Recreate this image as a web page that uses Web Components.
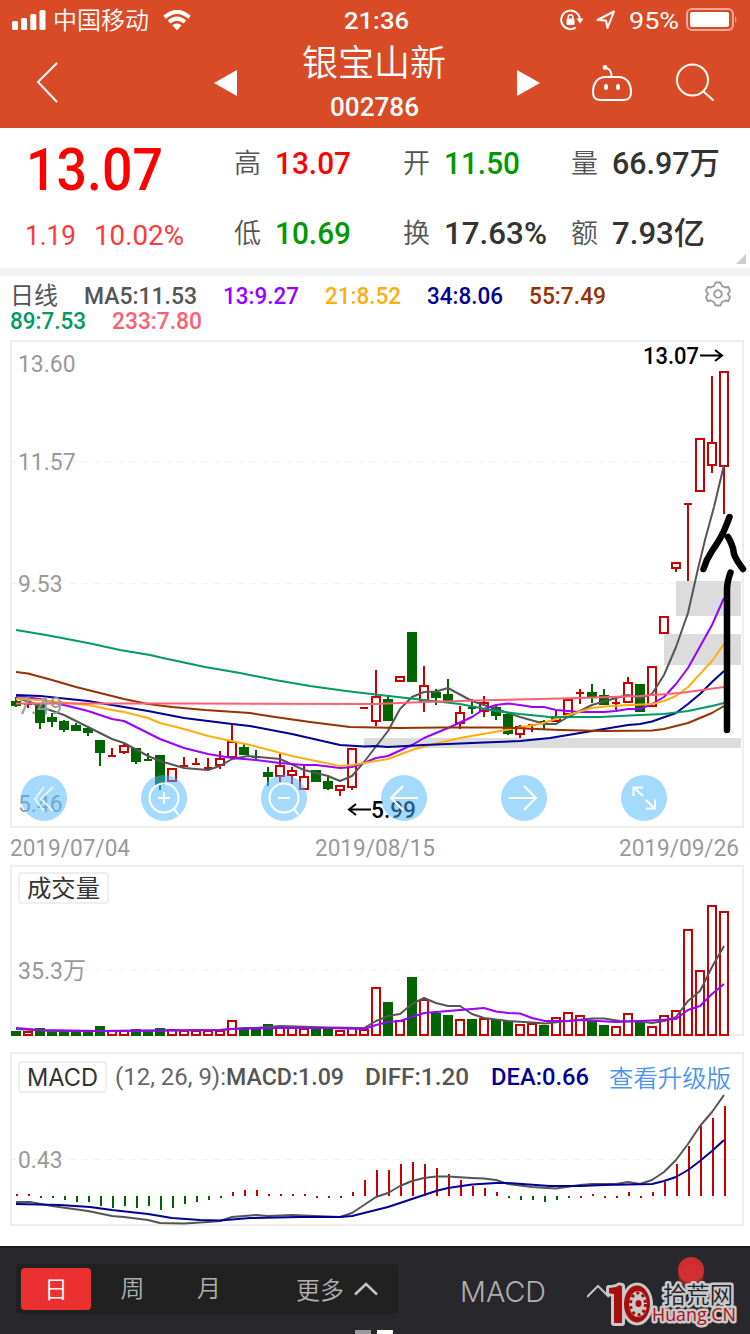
<!DOCTYPE html>
<html lang="zh-CN">
<head>
<meta charset="UTF-8">
<title>银宝山新 002786</title>
<style>
    body {
        margin: 0;
        width: 750px;
        height: 1334px;
        overflow: hidden;
        background: #fff;
        font-family: Roboto, "Noto Sans CJK SC", sans-serif;
        color: #333;
    }
</style>
</head>
<body>
<stock-app></stock-app>

<script>
class FitText extends HTMLElement {
    connectedCallback() {
        if (this.shadowRoot) return;
        this.attachShadow({ mode: 'open' });
        const w = Number(this.getAttribute('w'));
        this.shadowRoot.innerHTML = `
            <style>
                :host { display: block; flex: none; width: ${w}px; line-height: 1; white-space: nowrap; }
                span { display: inline-block; transform-origin: 0 50%; white-space: pre; vertical-align: top; }
            </style>
            <span><slot></slot></span>
        `;
        const span = this.shadowRoot.querySelector('span');
        const real = span.getBoundingClientRect().width;
        if (real) span.style.transform = `scaleX(${w / real})`;
    }
}

class StatusBar extends HTMLElement {
    constructor() {
        super();
        this.attachShadow({ mode: 'open' });
        this.shadowRoot.innerHTML = `
            <style>
                :host {
                    display: grid;
                    grid-template-columns: 1fr auto 1fr;
                    align-items: center;
                    height: 40px;
                    padding: 0 12px 0 12px;
                    background: #d94b26;
                    color: #fff;
                    font-size: 24px;
                }
                div { display: flex; align-items: center; }
                .carrier { margin: 2px 14px 0 7px; font-weight: 350; }
                .time { margin: 2px 0 0 3px; font-weight: 500; }
                .right { justify-content: flex-end; }
                .battery-text { margin: 2px 7px 0 13px; font-weight: 400; }
                svg { display: block; flex: none; }
            </style>
            <div>
                <svg width="34" height="20" fill="#fff">
                    <rect x="0" y="11" width="6" height="9" rx="1.5"/>
                    <rect x="9" y="8" width="6" height="12" rx="1.5"/>
                    <rect x="18.3" y="4" width="6" height="16" rx="1.5"/>
                    <rect x="27.5" y="0" width="6" height="20" rx="1.5"/>
                </svg>
                <fit-text class="carrier" w="96">中国移动</fit-text>
                <svg width="28" height="21" viewBox="0 0 28 21">
                    <path d="M1.5 7.2Q14-3.6 26.5 7.2M6 12Q14 5.200 22 12" fill="none" stroke="#fff" stroke-width="4"/>
                    <path d="M9.300 15.300Q14 11.600 18.700 15.300L14 20.300Z" fill="#fff"/>
                </svg>
            </div>
            <fit-text class="time" w="65">21:36</fit-text>
            <div class="right">
                <svg width="24" height="22" viewBox="0 0 24 22" fill="none" stroke="#fff" stroke-width="2">
                    <path d="M15.800 18.500A9.300 9.300 0 1 1 19.800 10"/>
                    <path d="M16.500 9.500h7l-3.500 5z" fill="#fff" stroke="none"/>
                    <rect x="6.500" y="9.500" width="8" height="6.500" rx="1" fill="#fff" stroke="none"/>
                    <path d="M8.200 10V8a2.300 2.300 0 0 1 4.600 0v2" stroke-width="1.500"/>
                </svg>
                <svg width="20" height="20" viewBox="0 0 20 20" style="margin-left:12px">
                    <path d="M1.500 10L18 1.500L11.500 18L10 10.500Z" fill="none" stroke="#fff" stroke-width="2" stroke-linejoin="round"/>
                </svg>
                <fit-text class="battery-text" w="50">95%</fit-text>
                <svg width="52" height="24" viewBox="0 0 52 24">
                    <rect x="1" y="1" width="46" height="21" rx="5" fill="none" stroke="#f0a793" stroke-width="2"/>
                    <rect x="4" y="4" width="39" height="15" rx="2" fill="#fff"/>
                    <path d="M49 8q3 3.500 0 7z" fill="#f0a793"/>
                </svg>
            </div>
        `;
    }
}

class NavBar extends HTMLElement {
    constructor() {
        super();
        this.attachShadow({ mode: 'open' });
        this.shadowRoot.innerHTML = `
            <style>
                :host {
                    display: grid;
                    grid-template-columns: 178px 88px 215px 74px 85px 40px;
                    align-items: center;
                    box-sizing: border-box;
                    height: 88px;
                    padding: 0 0 2px 36px;
                    background: #d94b26;
                    color: #fff;
                }
                svg { display: block; fill: none; stroke: #fff; stroke-width: 2; }
                .title { display: flex; flex-direction: column; align-items: center; gap: 12px; width: 144px; }
                .name { font-size: 36px; font-weight: 350; }
                .code { font-size: 26px; font-weight: 500; }
            </style>
            <svg width="24" height="42"><path d="M21 1L2 20L21 40"/></svg>
            <svg width="24" height="26"><path d="M0 13L23 0V26Z" fill="#fff" stroke="none"/></svg>
            <div class="title">
                <fit-text class="name" w="144"><slot name="name"></slot></fit-text>
                <fit-text class="code" w="89"><slot name="code"></slot></fit-text>
            </div>
            <svg width="24" height="26"><path d="M0 0L23 13L0 26Z" fill="#fff" stroke="none"/></svg>
            <svg width="42" height="38" viewBox="0 0 42 38">
                <path d="M14 4Q20.500 4 20.500 13M15 13H27C37 13 40 21 40 28C40 34.500 37 36 31 36H11C5 36 2 34.500 2 28C2 21 5 13 15 13Z"/>
                <circle cx="14" cy="3.500" r="2.400" fill="#fff" stroke="none"/>
                <g fill="#fff" stroke="none"><ellipse cx="15" cy="23" rx="2" ry="3"/><ellipse cx="27" cy="23" rx="2" ry="3"/></g>
            </svg>
            <svg width="40" height="40"><circle cx="16.500" cy="17" r="15.500"/><path d="M27 28L37.500 37.500"/></svg>
        `;
    }
}

class QuotePanel extends HTMLElement {
    constructor() {
        super();
        this.attachShadow({ mode: 'open' });
        // label, value, value width, colour
        const cells = [
            ['高', '13.07', 75, '#f00'], ['开', '11.50', 75, '#090'], ['量', '66.97万', 107, '#333'],
            ['低', '10.69', 75, '#090'], ['换', '17.63%', 102, '#333'], ['额', '7.93亿', 92, '#333'],
        ];
        this.shadowRoot.innerHTML = `
            <style>
                :host {
                    display: grid;
                    grid-template-columns: 234px 1fr 4px;
                    height: 140px;
                    border-bottom: 8px solid #f4f4f4;
                }
                .price { padding: 12px 0 0 25px; }
                .big { font-size: 59px; font-weight: 500; color: #f00; margin-left: 1px; }
                .change { display: flex; gap: 18px; margin-top: 23px; font-size: 28px; color: #ff3838; }
                .cells { display: grid; grid-template-columns: 169px 168px 1fr; grid-template-rows: 70px 70px; }
                .cell { display: flex; align-items: center; gap: 14px; font-size: 31px; font-weight: 500; }
                .label { margin-top: 3px; font-size: 27px; font-weight: 350; color: #555; }
                svg { align-self: end; justify-self: end; margin: 0 4px 4px 0; overflow: visible; }
            </style>
            <div class="price">
                <fit-text class="big" w="137">13.07</fit-text>
                <div class="change"><fit-text w="51">1.19</fit-text><fit-text w="90">10.02%</fit-text></div>
            </div>
            <div class="cells">
                ${cells.map(([label, value, w, color]) => `
                    <div class="cell"><fit-text class="label" w="27">${label}</fit-text><fit-text w="${w + 1}" style="color:${color}">${value}</fit-text></div>
                `).join('')}
            </div>
            <svg width="10" height="10"><path d="M10 0V10H0Z" fill="#ccc"/></svg>
        `;
    }
}

class MaLegend extends HTMLElement {
    constructor() {
        super();
        this.attachShadow({ mode: 'open' });
        this.shadowRoot.innerHTML = `
            <style>
                :host { display: block; height: 57px; padding: 7px 19px 0 10px; font-size: 24px; font-weight: 500; box-sizing: content-box; }
                div { display: flex; gap: 26px; height: 25px; align-items: center; }
                svg { margin: -4px 0 0 auto; }
            </style>
            <div>
                <fit-text w="48" style="color:#555;font-weight:400">日线</fit-text>
                <fit-text w="113" style="color:#555">MA5:11.53</fit-text>
                <fit-text w="76" style="color:#90f">13:9.27</fit-text>
                <fit-text w="76" style="color:#ffae0d">21:8.52</fit-text>
                <fit-text w="76" style="color:#000096">34:8.06</fit-text>
                <fit-text w="77" style="color:#963200">55:7.49</fit-text>
                <svg width="26" height="26" viewBox="-13 -13 26 26" fill="none" stroke="#999" stroke-width="1.800" stroke-linejoin="round">
                    <path d="M-2.500-11.500H2.500L4-8L7.500-6.500L10.500-7L12-3L9.800 0L12 3L10.500 7L7.500 6.500L4 8L2.500 11.500H-2.500L-4 8L-7.500 6.500L-10.500 7L-12 3L-9.800 0L-12-3L-10.500-7L-7.500-6.500L-4-8Z"/>
                    <circle r="3.800"/>
                </svg>
            </div>
            <div>
                <fit-text w="76" style="color:#009a64">89:7.53</fit-text>
                <fit-text w="90" style="color:#ff5f73">233:7.80</fit-text>
            </div>
        `;
    }
}

const UP = '#c80000';
const DOWN = '#006400';
const colX = i => 16 + i * 12;

// direction, body top, body bottom, high, low, volume top, macd end
const DAYS = [
    ['d',701,706,697,707,1031,1194], ['u',703,705,701,708,1031,1194], ['d',704,723,704,729,1028,1198], ['d',717,722,713,727,1031,1198],
    ['d',721,730,720,732,1032,1200], ['d',725,731,723,731,1031,1202], ['d',728,733,726,736,1031,1202], ['d',740,753,740,766,1026,1206],
    ['u',755,757,748,757,1030,1208], ['u',745,753,743,754,1030,1206], ['d',748,762,748,764,1029,1208], ['d',759,761,753,761,1031,1206],
    ['d',755,785,755,790,1028,1210], ['u',768,782,768,782,1029,1208], ['u',765,767,757,767,1030,1204], ['u',763,765,758,765,1030,1202],
    ['u',767,769,758,769,1030,1200], ['u',758,766,751,769,1030,1198], ['u',741,758,724,758,1020,1192], ['d',747,755,744,755,1028,1190],
    ['d',756,758,750,760,1028,1190], ['d',772,777,767,786,1024,1194], ['u',765,777,754,782,1027,1194], ['u',770,776,767,784,1026,1194],
    ['u',776,790,766,790,1028,1194], ['d',770,782,770,782,1029,-1], ['d',781,789,777,790,1029,1198], ['u',785,791,785,796,1030,1198],
    ['u',748,788,748,790,1027,1192], ['u',707,709,707,709,1029,1180], ['u',696,722,670,726,987,1170], ['d',699,721,697,721,1002,1170],
    ['u',676,682,676,682,1020,1164], ['d',632,682,632,682,977,1162], ['u',685,702,666,712,999,1164], ['d',692,698,689,705,1013,1168],
    ['d',694,702,679,702,1015,1174], ['u',712,724,706,729,1019,1180], ['d',707,709,699,714,1019,1186], ['u',702,712,696,717,1018,1188],
    ['d',707,716,705,720,1020,1192], ['d',714,734,713,735,1021,1198], ['u',726,735,725,738,1024,1200], ['u',724,726,724,732,1023,1200],
    ['d',721,723,720,729,1025,1202], ['u',717,722,711,722,1017,1200], ['u',699,715,699,715,1012,1198], ['u',692,694,689,704,1015,-1],
    ['d',692,697,684,703,1021,1194], ['d',695,705,689,705,1025,-1], ['u',702,704,699,710,1026,-1], ['u',682,703,677,703,1013,1192],
    ['d',684,712,684,712,1022,-1], ['u',666,707,666,707,1026,1192], ['u',616,634,616,634,1015,1182], ['u',562,569,562,572,1010,1164],
    ['u',503,505,503,581,929,1146], ['u',438,492,438,492,970,1126], ['u',442,466,376,473,905,1118], ['u',371,467,371,514,911,1106],
];

const line = (points, color) => `<polyline points="${points}" fill="none" stroke="${color}" stroke-width="2" stroke-linejoin="round"/>`;
const grid = y => `<path d="M12 ${y}H737" stroke="#f0f0f0" stroke-dasharray="6 6" stroke-dashoffset="2"/>`;
const label = (x, y, w, text, color = '#999', weight = 400) =>
    `<text x="${x}" y="${y}" textLength="${w}" lengthAdjust="spacingAndGlyphs" fill="${color}" font-weight="${weight}">${text}</text>`;

const bar = (x, top, bottom, dir) => dir === 'u'
    ? `<rect x="${x - 4}" y="${top + 1}" width="8" height="${bottom - top - 2}" fill="#fff" stroke="${UP}" stroke-width="2"/>`
    : `<rect x="${x - 5}" y="${top}" width="10" height="${bottom - top}" fill="${DOWN}"/>`;

// Bar with a wick through the middle; rising days are hollow
const candle = ([dir, top, bottom, high, low], i) => {
    const x = colX(i);
    const color = dir === 'u' ? UP : DOWN;
    let out = '';
    if (high < top) out += `<rect x="${x - 1}" y="${high}" width="2" height="${top - high}" fill="${color}"/>`;
    if (low > bottom) out += `<rect x="${x - 1}" y="${bottom}" width="2" height="${low - bottom}" fill="${color}"/>`;
    if (bottom - top <= 2) out += `<rect x="${x - 4}" y="${top}" width="8" height="2" fill="${color}"/>`;
    else out += bar(x, top, bottom, dir);
    return out;
};

/**
 * Framed plot with the shared look; subclasses give plot() and area()
 * Coordinates inside the plots are screen coordinates
 */
class ChartPanel extends HTMLElement {
    constructor() {
        super();
        this.attachShadow({ mode: 'open' });
        const [top, height] = this.area();
        this.shadowRoot.innerHTML = `
            <style>
                :host { display: grid; width: 750px; height: ${height}px; }
                svg.plot { grid-area: 1 / 1; display: block; font-size: 24px; overflow: visible; }
                .over { grid-area: 1 / 1; }
            </style>
            <svg class="plot" width="750" height="${height}" viewBox="0 ${top} 750 ${height}">
                <rect x="11" y="${top + 1}" width="732" height="${height - 2}" fill="none" stroke="#eee" stroke-width="2"/>
                ${this.plot()}
            </svg>
            <div class="over"><slot></slot></div>
        `;
    }
}

class PriceChart extends ChartPanel {
    area() { return [340, 488]; }

    plot() {
        return `
            ${grid(461.5)}${grid(583.5)}${grid(705.5)}
            <g fill="#dcdcdc">
                <rect x="676" y="581" width="65" height="35"/>
                <rect x="664" y="634" width="77" height="31"/>
                <rect x="364" y="738" width="377" height="10"/>
            </g>
            ${DAYS.map(candle).join('')}
            ${line('16,698 30,702 44,708 64,715 88,727 112,739 124,743 148,756 160,761 184,768 208,770 220,766 232,759 248,756 280,759 304,770 328,776 340,781 352,776 364,762 388,731 400,709 412,697 424,692 436,691.5 448,688 472,701 496,709 520,717 545,724 556,724 568,717 592,705 616,698 628,695 640,698 652,694 664,675 676,647 688,613 697,573 705,540 714,507 724,465', '#555')}
            ${line('16,696 40,699 64,705 88,711 112,719 124,721 148,733 160,739 184,748 208,754 232,758 256,760 280,763 304,765 316,765 340,768 352,767 364,763 376,758 388,756 412,745 424,738 448,728 472,717 484,709 496,705 508,703.5 520,705 532,707 544,707 556,710 580,712 604,712 616,711 628,709 640,709 652,704 664,697 676,684 688,668 712,625 724,598', '#90f')}
            ${line('16,699 40,700 88,705 112,710 124,712 148,718 160,723 184,729 208,736 250,745 292,756 340,766 352,765 388,759 412,750 430,745 460,738 500,731 540,724 568,715 592,708 610,706 652,704 664,701 676,696 688,687 712,661 724,644', '#ffae0d')}
            ${line('16,695 40,696 88,701 112,705 148,711 184,718 232,724 250,726 292,734 340,745 364,746.5 376,746 388,747 424,745 484,742.5 520,741 550,738 580,733 628,725 640,724 652,721.5 676,713 688,704 700,694 712,682 724,671', '#000096')}
            ${line('16,672 28,673.5 52,680 76,687 100,693 124,699 148,704 172,707 205,710 250,713 275,717 310,722 350,727 400,728 440,727.5 500,727.5 560,730 604,731 652,730.5 664,729 688,723 712,713 724,706', '#963200')}
            ${line('16,630 46,635 88,643 120,650 150,655 163,658 205,667 240,673 275,680 310,686 346,691 380,695 424,700 460,704 496,711 520,714 550,717 600,717 640,715 664,714 688,711 712,706 724,703', '#009a64')}
            ${line('16,703.5 200,703.5 376,704 424,702 496,700 580,698 640,696 680,693 724,687', '#ff5f73')}
            ${label(18, 372, 57.5, '13.60')}
            ${label(18, 470, 57.5, '11.57')}
            ${label(18, 592, 44.5, '9.53')}
            ${label(18, 714, 44.5, '7.49')}
            ${label(18, 812, 44.5, '5.46')}
            ${label(643, 364, 56, '13.07', '#000', 500)}
            ${label(371, 818, 45, '5.99', '#000', 500)}
            <path d="M700 355.500H722M715 350L722 355.500L715 361M371 809.500H349M356 804L349 809.500L356 815" fill="none" stroke="#000" stroke-width="2"/>
            <path d="M729.500 517C724 531 723 535 712 551Q706 560 703.500 569M728 537Q733 545 734 554Q736 560 743 569M730.500 572.500Q727 582 727 590V730" fill="none" stroke="#000" stroke-width="6.500" stroke-linecap="round" stroke-linejoin="round"/>
        `;
    }
}

class VolumeChart extends ChartPanel {
    area() { return [865, 171]; }

    plot() {
        return `
            ${grid(970)}
            ${DAYS.map((d, i) => bar(colX(i), d[5], 1036, d[0])).join('')}
            ${line('16,1029 52,1031 100,1031 160,1030.5 220,1030 244,1028 256,1028 280,1026 328,1027.5 364,1028 376,1021 388,1016 400,1014 412,1004 424,998 436,1003 448,1006 460,1006 472,1014 484,1018 508,1021 532,1022.5 545,1023.5 568,1021 592,1018.5 604,1018.5 620,1021 640,1021.500 652,1023 664,1021 676,1017 688,1001 700,991 712,967 724,946', '#555')}
            ${line('16,1028 40,1030 100,1031 220,1030 232,1029 280,1028 330,1028 364,1029 376,1025 388,1022 400,1021 424,1013 448,1011 484,1008 496,1011.5 508,1013 520,1013.500 532,1018 545,1021 568,1021 580,1020 616,1022 652,1020.5 676,1019 688,1010 700,1006 712,994 724,984', '#90f')}
            ${label(18, 979, 68, '35.3万')}
        `;
    }
}

class MacdChart extends ChartPanel {
    area() { return [1052, 174]; }

    // Bars grow from the zero line at 1196; -1 marks a flat day
    stick(end, i) {
        const flat = end === -1;
        const rising = end < 1196;
        const y = flat || !rising ? 1196 : end;
        const h = flat ? 2 : Math.abs(1196 - end);
        return `<rect x="${colX(i)}" y="${y}" width="2" height="${h}" fill="${rising ? UP : DOWN}"/>`;
    }

    plot() {
        return `
            ${grid(1159.5)}
            ${DAYS.map((d, i) => this.stick(d[6], i)).join('')}
            ${line('16,1202 30,1202 52,1206 88,1211 112,1216 124,1217 148,1220 160,1223 184,1223.5 208,1222 220,1221 232,1217 256,1215 268,1216 292,1215 316,1216 340,1217 352,1213 364,1205 376,1197 388,1193 400,1186 412,1181 424,1178 436,1176.5 448,1176.5 472,1178 484,1178.5 496,1180 508,1184 532,1187 556,1188.5 580,1185 592,1184 616,1184 628,1182 640,1184 652,1180 664,1172 676,1160 688,1144 700,1126 712,1112 724,1095', '#555')}
            ${line('16,1204 60,1205 90,1207 112,1210 148,1214 172,1218 200,1220 220,1220.5 250,1218 300,1217 340,1217 352,1216 364,1213 376,1210 388,1207 412,1199 436,1191 448,1188 472,1184.5 496,1183 508,1183 550,1186 580,1186 604,1185 652,1184 664,1181 676,1177 688,1170 700,1161 712,1151 724,1140', '#000096')}
            ${label(18, 1168, 44.5, '0.43')}
        `;
    }
}

/**
 * Small bordered name in the corner of a plot
 */
class ChartTag extends HTMLElement {
    constructor() {
        super();
        this.attachShadow({ mode: 'open' });
        this.shadowRoot.innerHTML = `
            <style>
                :host {
                    display: inline-flex;
                    align-items: center;
                    box-sizing: border-box;
                    height: 32px;
                    padding: 2px 7px 0;
                    border: 2px solid #eee;
                    border-radius: 4px;
                    background: #fff;
                    font-size: 24px;
                    color: #333;
                }
            </style>
            <slot></slot>
        `;
    }
}

class ChartControls extends HTMLElement {
    constructor() {
        super();
        this.attachShadow({ mode: 'open' });
        const icons = [
            '<path d="M23 12L14 24L23 36M32 12L20 24L32 36" opacity=".75"/>',
            '<circle cx="23" cy="23" r="14.500"/><path d="M33 34L37.500 40M17 23H29M23 17V29"/>',
            '<circle cx="23" cy="23" r="14.500"/><path d="M33 34L37.500 40M17 23H29"/>',
            '<path d="M37 23H10M22 11L10 23L22 35"/>',
            '<path d="M8 23H35M23 11L35 23L23 35"/>',
            '<path d="M22 21L13 12.500M12.500 21V12.500H22M25 25L33.500 33.500M34 24.500V33.500H25"/>',
        ];
        this.shadowRoot.innerHTML = `
            <style>
                :host { display: flex; gap: 74px; padding: 435px 0 0 21px; }
                svg { display: block; border-radius: 50%; background: rgba(75, 181, 255, .5); }
                svg:first-child { background: rgba(75, 181, 255, .37); }
            </style>
            ${icons.map(icon => `<svg width="46" height="46" fill="none" stroke="#fff" stroke-width="2">${icon}</svg>`).join('')}
        `;
    }
}

class BottomBar extends HTMLElement {
    constructor() {
        super();
        this.attachShadow({ mode: 'open' });
        this.shadowRoot.innerHTML = `
            <style>
                :host {
                    display: grid;
                    grid-template-columns: 444px 149px 1fr;
                    grid-template-rows: 66px 4px;
                    box-sizing: border-box;
                    height: 88px;
                    padding: 16px 0 0 16px;
                    border-top: 2px solid #1b1a1e;
                    background: #28272c;
                    color: #b0b0b0;
                    font-size: 24px;
                    font-weight: 350;
                }
                .periods {
                    display: grid;
                    grid-template-columns: 70px 83px 70px 1fr;
                    align-items: center;
                    box-sizing: border-box;
                    width: 382px;
                    height: 50px;
                    padding: 0 5px;
                    border-radius: 4px;
                    background: #212121;
                    text-align: center;
                    line-height: 42px;
                }
                .active { height: 42px; line-height: 45px; border-radius: 4px; background: #ea3030; color: #fff; }
                .more { display: flex; gap: 10px; align-items: center; padding-left: 52px; }
                .more fit-text { margin-top: 3px; }
                .pick { display: flex; align-items: center; gap: 41px; height: 54px; font-size: 29px; }
                .pages { display: flex; gap: 6px; grid-column: 1 / -1; padding-left: 339px; }
                .pages i { width: 16px; height: 4px; background: #999; }
                .pages i + i { background: #fff; }
                .chevron { fill: none; stroke: #c4c4c4; stroke-width: 2.500; flex: none; }
                .mark { overflow: visible; height: 50px; }
            </style>
            <div class="periods">
                <span class="active">日</span>
                <span>周</span>
                <span>月</span>
                <span class="more"><fit-text w="48">更多</fit-text><svg class="chevron" width="24" height="14"><path d="M1 12.500L12 2L23 12.500"/></svg></span>
            </div>
            <div class="pick">
                <fit-text w="86" style="font-family:Inter,sans-serif">MACD</fit-text>
                <svg class="chevron" width="24" height="14" style="stroke-width:2"><path d="M0 13L11 2L22 13"/></svg>
            </div>
            <svg class="mark" width="129" viewBox="609 1264 129 50">
                <circle cx="691" cy="1270" r="13" fill="#cc2d30"/>
                <path d="M678.500 1273A13 13 0 0 1 703.500 1273L703 1286H679Z" fill="#d92f31" opacity=".5"/>
                <g stroke="#c9c9c9" stroke-width="6" stroke-linejoin="round" paint-order="stroke">
                    <path d="M609 1288Q616 1288 619 1285.500L622 1286V1323H614V1294L609 1293Z" fill="#a80d10"/>
                    <ellipse cx="637" cy="1304" rx="13" ry="18.500" fill="#a80d10"/>
                </g>
                <path d="M609 1288Q616 1288 619 1285.500L622 1286V1323H614V1294L609 1293Z" fill="#a80d10"/>
                <ellipse cx="638" cy="1304" rx="9" ry="13" fill="#c9c9c9"/>
                <ellipse cx="638" cy="1304" rx="7.500" ry="11" fill="none" stroke="#a80d10" stroke-width="3" stroke-dasharray="3 3"/>
                <ellipse cx="638.500" cy="1303.500" rx="3" ry="3.500" fill="#a80d10"/>
                <text x="663" y="1303" textLength="70" lengthAdjust="spacingAndGlyphs" font-size="23" font-weight="350" fill="#222" stroke="#c9c9c9" stroke-width="5" paint-order="stroke" stroke-linejoin="round">拾荒网</text>
                <text x="652" y="1321" textLength="84" lengthAdjust="spacingAndGlyphs" font-family="Open Sans, sans-serif" font-size="19" font-weight="500" fill="#b01015" stroke="#c9c9c9" stroke-width="5" paint-order="stroke" stroke-linejoin="round">Huang.CN</text>
            </svg>
            <div class="pages"><i></i><i></i></div>
        `;
    }
}

class StockApp extends HTMLElement {
    constructor() {
        super();
        this.attachShadow({ mode: 'open' });
        this.shadowRoot.innerHTML = `
            <style>
                :host { display: flex; flex-direction: column; width: 750px; height: 1334px; overflow: hidden; }
                .dates { display: flex; justify-content: space-between; align-items: center; height: 37px; padding: 2px 11px 0 10px; box-sizing: border-box; font-size: 24px; color: #999; }
                .volume-tag { margin: 7px 0 0 18px; }
                macd-chart { margin-top: 16px; }
                .macd-head { display: flex; align-items: center; padding: 9px 0 0 18px; font-size: 24px; font-weight: 500; color: #555; }
                bottom-bar { margin-top: auto; }
            </style>
            <status-bar></status-bar>
            <nav-bar><span slot="name">银宝山新</span><span slot="code">002786</span></nav-bar>
            <quote-panel></quote-panel>
            <ma-legend></ma-legend>
            <price-chart><chart-controls></chart-controls></price-chart>
            <div class="dates">
                <fit-text w="120">2019/07/04</fit-text>
                <fit-text w="120">2019/08/15</fit-text>
                <fit-text w="120">2019/09/26</fit-text>
            </div>
            <volume-chart><chart-tag class="volume-tag"><fit-text w="73">成交量</fit-text></chart-tag></volume-chart>
            <macd-chart>
                <div class="macd-head">
                    <chart-tag><fit-text w="71" style="font-family:Inter,sans-serif;font-weight:400">MACD</fit-text></chart-tag>
                    <fit-text w="111" style="margin-left:8px;color:#666;font-weight:400">(12, 26, 9):</fit-text>
                    <fit-text w="118">MACD:1.09</fit-text>
                    <fit-text w="104" style="margin-left:21px">DIFF:1.20</fit-text>
                    <fit-text w="98" style="margin-left:22px;color:#000096">DEA:0.66</fit-text>
                    <fit-text w="122" style="margin:3px 0 0 20px;color:#4a96ee;font-weight:350">查看升级版</fit-text>
                </div>
            </macd-chart>
            <bottom-bar></bottom-bar>
        `;
    }
}

// Containers first, so fit-text can measure text that is already laid out
customElements.define('status-bar', StatusBar);
customElements.define('nav-bar', NavBar);
customElements.define('quote-panel', QuotePanel);
customElements.define('ma-legend', MaLegend);
customElements.define('chart-tag', ChartTag);
customElements.define('chart-controls', ChartControls);
customElements.define('price-chart', PriceChart);
customElements.define('volume-chart', VolumeChart);
customElements.define('macd-chart', MacdChart);
customElements.define('bottom-bar', BottomBar);
customElements.define('stock-app', StockApp);
customElements.define('fit-text', FitText);
</script>
</body>
</html>
